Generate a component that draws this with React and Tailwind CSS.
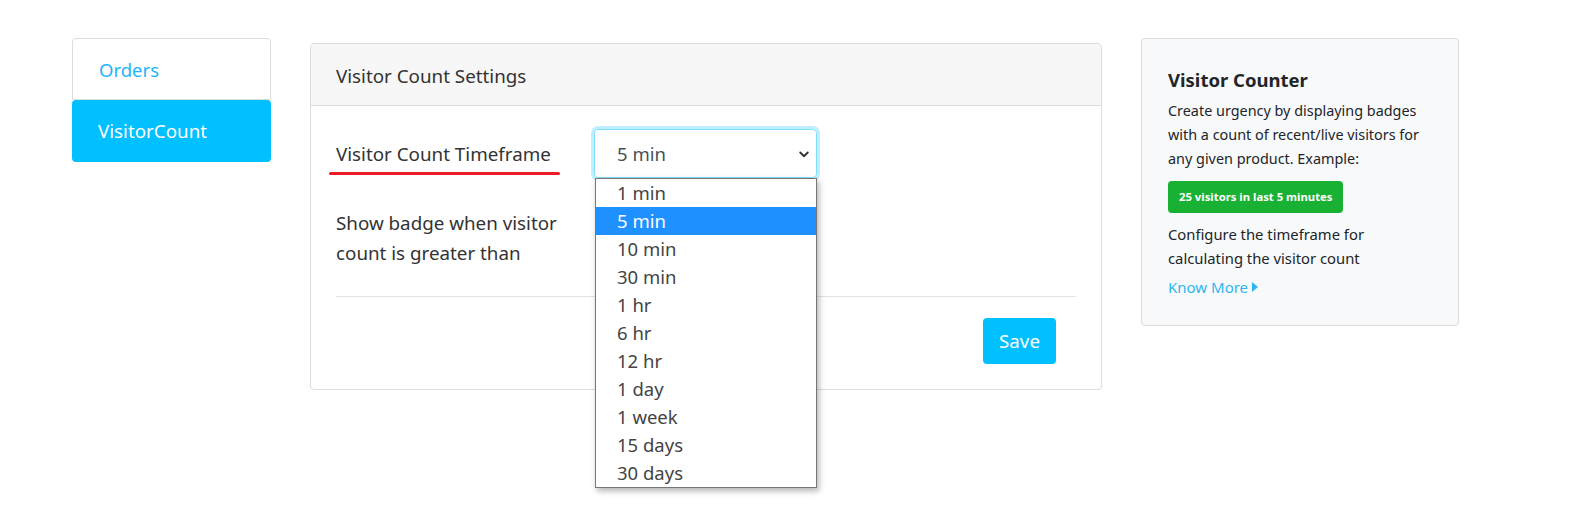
export default function App() {
  const options = ['1 min', '5 min', '10 min', '30 min', '1 hr', '6 hr', '12 hr', '1 day', '1 week', '15 days', '30 days']
  const selected = '5 min'

  return (
    <div className="min-h-screen bg-white text-[#212529]" style={{ fontFamily: '"Noto Sans", "Open Sans", sans-serif' }}>
      <div className="flex items-start pl-[72px] pt-[38px]">
        {/* left nav */}
        <div className="w-[199px] shrink-0 flex flex-col">
          <a href="#" className="h-[62px] flex items-center pl-[26px] pt-[1px] text-[18.5px] text-[#1fb6f5] border border-[#dcdcdc] rounded-t-[4px]">
            Orders
          </a>
          <a href="#" className="h-[62px] flex items-center pl-[26px] pt-[1px] text-[18.8px] text-white bg-[#00c0ff] rounded-[4px]">
            VisitorCount
          </a>
        </div>

        {/* main card */}
        <div className="ml-[39px] mt-[5px] w-[792px] shrink-0 h-[347px] border border-[#dcdcdc] rounded-[4px] bg-white">
          <div className="h-[62px] bg-[#f7f7f7] border-b border-[#dcdcdc] flex items-center pl-[25px] pt-[3px] text-[18.8px] text-[#333] rounded-t-[4px]">
            Visitor Count Settings
          </div>
          <div className="px-[25px]">
            <div className="flex items-start pt-[23px]">
              <div className="w-[258px] pt-[11px]">
                <span className="relative text-[18.8px] text-[#333]">
                  Visitor Count Timeframe
                  <span className="absolute -left-[7px] -right-[9px] top-[31px] h-[3px] rounded-full bg-[#ed1c24]"></span>
                </span>
              </div>
              <div className="relative">
                <div className="w-[223px] h-[49px] border border-[#80dfff] rounded-[4px] ring-[3px] ring-[#bfefff] flex items-center justify-between pl-[22px] pr-[6px] text-[18.5px] text-[#495057]">
                  <span>5 min</span>
                  <svg width="12" height="12" viewBox="0 0 16 16" fill="none" stroke="#333" strokeWidth="2.5" strokeLinecap="round" strokeLinejoin="round">
                    <path d="M3 6l5 5 5-5" />
                  </svg>
                </div>
                <div className="absolute left-[1px] top-[49px] w-[222px] bg-white border border-[#767676] shadow-[2px_3px_6px_rgba(0,0,0,0.3)] z-10">
                  {options.map((o) => (
                    <div
                      key={o}
                      className={
                        o === selected
                          ? 'h-[28px] flex items-center pl-[21px] text-[18.5px] bg-[#1e90ff] text-white'
                          : 'h-[28px] flex items-center pl-[21px] text-[18.5px] text-[#444]'
                      }
                    >
                      {o}
                    </div>
                  ))}
                </div>
              </div>
            </div>
            <div className="mt-[30px] text-[18.8px] leading-[30px] text-[#333]">
              Show badge when visitor
              <br />
              count is greater than
            </div>
            <div className="mt-[28px] border-t border-[#e3e3e3]"></div>
            <div className="flex justify-end pt-[21px] pr-[20px]">
              <button className="w-[73px] h-[46px] bg-[#00c0ff] text-white text-[18.8px] rounded-[4px]">Save</button>
            </div>
          </div>
        </div>

        {/* right info card */}
        <div className="ml-[39px] w-[318px] shrink-0 h-[288px] bg-[#f8f9fa] border border-[#dcdcdc] rounded-[4px] px-[26px] pt-[28px]">
          <div className="text-[18.5px] font-bold text-[#212529] leading-[26px]">Visitor Counter</div>
          <p className="mt-[6px] text-[14.4px] leading-[24px] text-[#212529]">
            Create urgency by displaying badges with a count of recent/live visitors for any given product. Example:
          </p>
          <div className="mt-[10px] inline-flex items-center h-[32px] px-[11px] rounded-[4px] bg-[#18b134] text-white text-[11.3px] font-bold">
            25 visitors in last 5 minutes
          </div>
          <p className="mt-[9px] text-[14.8px] leading-[24px] text-[#212529]">
            Configure the timeframe for
            <br />
            calculating the visitor count
          </p>
          <a href="#" className="mt-[6px] flex items-center gap-[4px] text-[15px] text-[#2fb6f0]">
            Know More
            <svg width="6" height="10" viewBox="0 0 6 10">
              <path d="M0 0l6 5-6 5z" fill="#2fb6f0" />
            </svg>
          </a>
        </div>
      </div>
    </div>
  )
}
